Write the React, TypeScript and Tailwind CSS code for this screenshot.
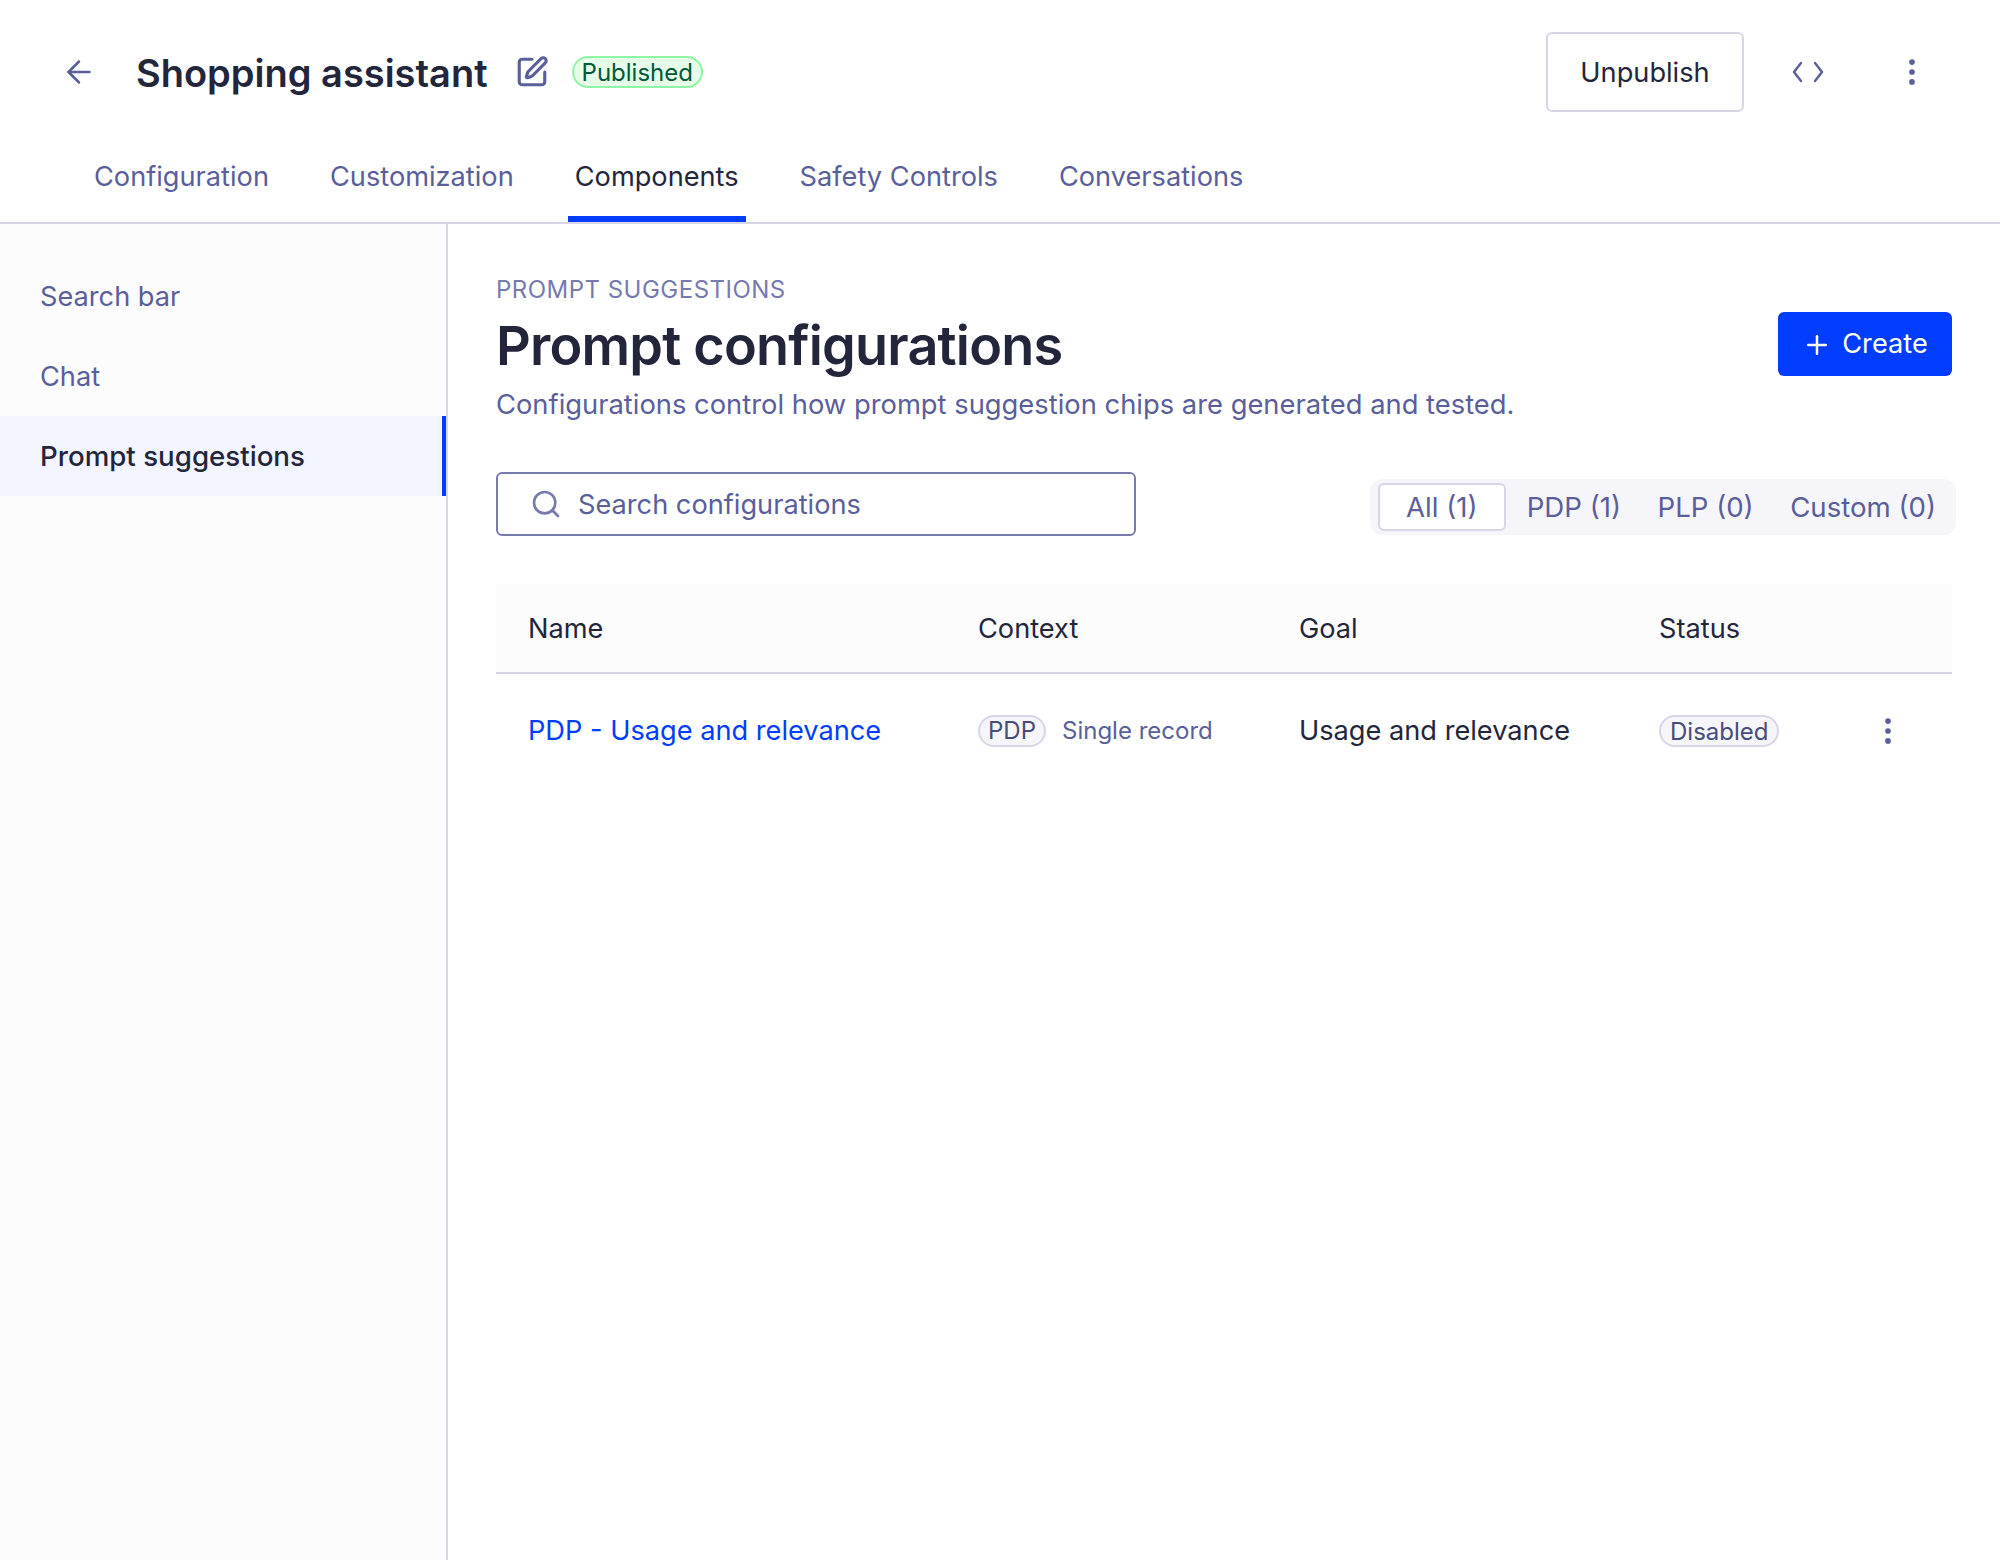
import { ArrowLeft, MoreVertical, Plus, Search, SquarePen } from "lucide-react";

const tabs = ["Configuration", "Customization", "Components", "Safety Controls", "Conversations"];
const filters = ["PDP (1)", "PLP (0)", "Custom (0)"];

function Tab({ label }: { label: string }) {
  const active = label === "Components";
  return (
    <div
      className={
        active
          ? "flex h-[68px] items-center border-b-[6px] border-[#003dff] px-[7px] pb-[15px] text-[#23263b]"
          : "flex h-[68px] items-center border-b-[6px] border-transparent px-[7px] pb-[15px] text-[#5a5e9a]"
      }
    >
      {label}
    </div>
  );
}

function Header() {
  return (
    <header className="border-b-2 border-[#d6d6e7] bg-white">
      <div className="flex h-[144px] items-center pr-[71px] pl-[61px]">
        <ArrowLeft className="h-[36px] w-[36px] text-[#5a5e9a]" strokeWidth={1.7} />
        <h1 className="ml-[39px] pt-[2px] text-[38px] leading-none font-semibold text-[#23263b]">Shopping assistant</h1>
        <SquarePen className="ml-[27px] h-[34px] w-[34px] text-[#5a5e9a]" strokeWidth={2.2} />
        <span className="ml-[23px] flex h-[32px] items-center rounded-full border-2 border-[#8ff5a4] bg-[#e6fde8] px-[8px] pt-[1px] text-[24px] text-[#00573a]">
          Published
        </span>
        <div className="ml-auto flex items-center">
          <button className="h-[80px] w-[198px] rounded-[6px] border-2 border-[#d6d6e7] bg-white pt-[2px] text-[27.2px] text-[#23263b]">
            Unpublish
          </button>
          <svg viewBox="0 0 32 24" className="ml-[48px] h-[24px] w-[32px] text-[#5a5e9a]" fill="none" stroke="currentColor" strokeWidth="2.4" strokeLinecap="round" strokeLinejoin="round">
            <polyline points="9,3 2,12 9,21" />
            <polyline points="23,3 30,12 23,21" />
          </svg>
          <MoreVertical className="ml-[71px] h-[34px] w-[34px] text-[#5a5e9a]" strokeWidth={2} />
        </div>
      </div>
      <nav className="flex h-[78px] items-end gap-[47px] pl-[87px] text-[27.2px]">
        {tabs.map((t) => (
          <Tab key={t} label={t} />
        ))}
      </nav>
    </header>
  );
}

function Sidebar() {
  return (
    <aside className="w-[448px] shrink-0 border-r-2 border-[#d6d6e7] bg-[#fcfcfd] pt-[32px] text-[27.2px]">
      <div className="flex h-[80px] items-center pt-[2px] pl-[40px] text-[#5a5e9a]">Search bar</div>
      <div className="flex h-[80px] items-center pt-[2px] pl-[40px] text-[#5a5e9a]">Chat</div>
      <div className="flex h-[80px] items-center border-r-4 border-[#003dff] bg-[#f2f4ff] pt-[2px] pl-[40px] text-[27.7px] font-medium text-[#23263b]">
        Prompt suggestions
      </div>
    </aside>
  );
}

function ConfigTable() {
  return (
    <div className="mt-[48px] text-[27.2px]">
      <div className="grid h-[90px] grid-cols-[450px_321px_360px_1fr] items-center border-b-2 border-[#d6d6e7] bg-[#fcfcfd] pt-[2px] pl-[32px] text-[#23263b]">
        <div>Name</div>
        <div>Context</div>
        <div>Goal</div>
        <div>Status</div>
      </div>
      <div className="grid h-[114px] grid-cols-[450px_321px_360px_1fr] items-center pl-[32px]">
        <div className="text-[#003dff]">PDP - Usage and relevance</div>
        <div className="flex items-center">
          <span className="flex h-[32px] items-center rounded-full border-2 border-[#d6d6e7] bg-[#f5f5fa] px-[8px] text-[24px] text-[#484c7a]">
            PDP
          </span>
          <span className="ml-[16px] text-[24px] text-[#5a5e9a]">Single record</span>
        </div>
        <div className="text-[#23263b]">Usage and relevance</div>
        <div className="flex items-center">
          <span className="flex h-[32px] items-center rounded-full border-2 border-[#d6d6e7] bg-[#f5f5fa] px-[9px] pt-[1px] text-[24px] text-[#484c7a]">
            Disabled
          </span>
          <MoreVertical className="ml-[92px] h-[34px] w-[34px] text-[#5a5e9a]" strokeWidth={2} />
        </div>
      </div>
    </div>
  );
}

function Main() {
  return (
    <main className="min-w-0 flex-1 bg-white px-[48px] pt-[50px]">
      <div className="flex items-center justify-between">
        <div>
          <div className="text-[24px] leading-[32px] tracking-[0.02em] text-[#777aaf]">PROMPT SUGGESTIONS</div>
          <h2 className="mt-[7px] text-[54px] leading-[66px] font-semibold tracking-[-0.015em] text-[#23263b]">
            Prompt configurations
          </h2>
          <p className="mt-[7px] text-[27.35px] leading-[38px] text-[#5a5e9a]">
            Configurations control how prompt suggestion chips are generated and tested.
          </p>
        </div>
        <button className="mb-[11px] flex h-[64px] w-[174px] items-center justify-center gap-[10px] rounded-[6px] bg-[#003dff] pt-[2px] text-[27.2px] text-white">
          <Plus className="h-[30px] w-[30px]" strokeWidth={2} />
          Create
        </button>
      </div>
      <div className="mt-[48px] flex items-end justify-between">
        <div className="flex h-[64px] w-[640px] items-center rounded-[6px] border-2 border-[#777aaf] pl-[32px] text-[27.2px] text-[#5a5e9a]">
          <Search className="h-[32px] w-[32px] text-[#777aaf]" strokeWidth={2} />
          <span className="ml-[16px] pt-[2px]">Search configurations</span>
        </div>
        <div className="-mr-[4px] mb-[1px] flex h-[56px] items-center rounded-[12px] bg-[#f5f5fa] pr-[20px] pl-[8px] text-[27.6px] text-[#5a5e9a]">
          <div className="flex h-[48px] w-[128px] items-center justify-center rounded-[6px] border-2 border-[#d6d6e7] bg-white pt-[2px]">All (1)</div>
          <div className="ml-[21px] flex gap-[36.5px] pt-[2px]">
            {filters.map((f) => (
              <span key={f}>{f}</span>
            ))}
          </div>
        </div>
      </div>
      <ConfigTable />
    </main>
  );
}

export default function App() {
  return (
    <div className="flex h-[1560px] w-[2000px] flex-col overflow-hidden bg-white font-['Inter',sans-serif]">
      <Header />
      <div className="flex min-h-0 flex-1">
        <Sidebar />
        <Main />
      </div>
    </div>
  );
}
